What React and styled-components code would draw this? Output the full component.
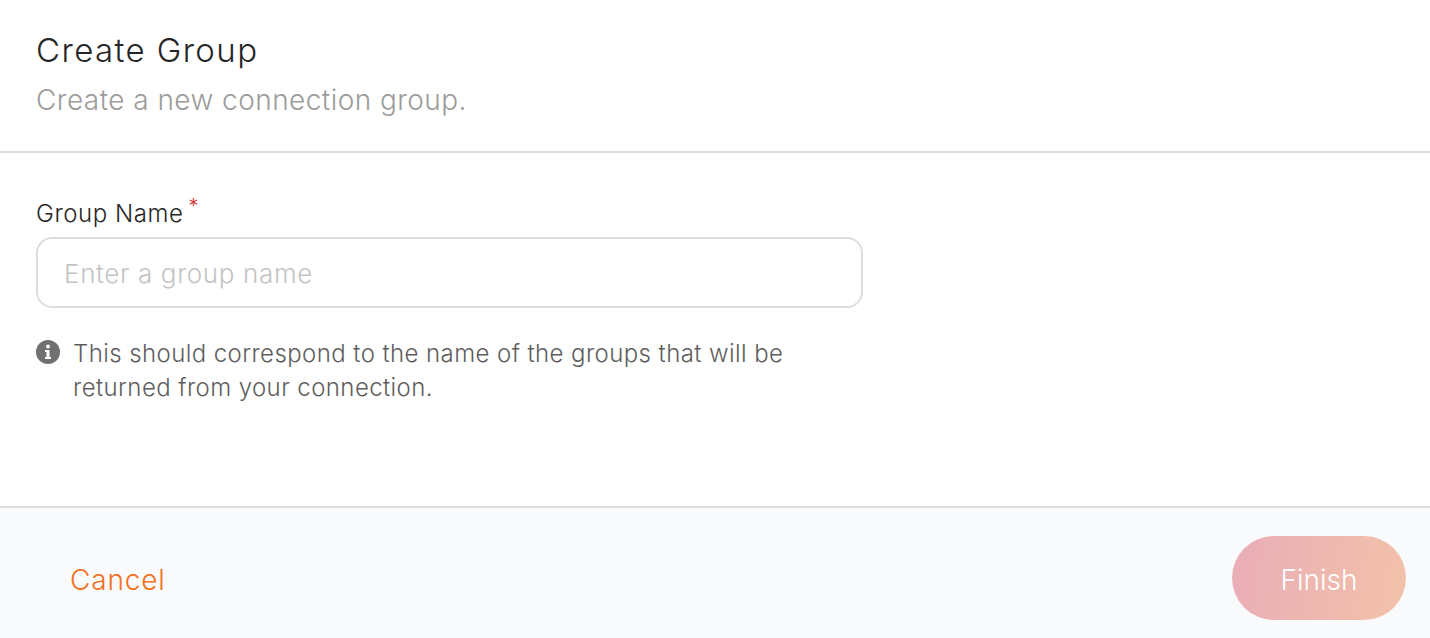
import React from "react";
import styled, { createGlobalStyle } from "styled-components";

const Global = createGlobalStyle`
  html, body { margin: 0; padding: 0; background: #fff; }
  * { box-sizing: border-box; }
`;
const Page = styled.div`
  width: 1430px; height: 638px; display: flex; flex-direction: column;
  font-family: "Inter", "Noto Sans", sans-serif; background: #fff; overflow: hidden;
`;
const Header = styled.header`
  height: 153px; padding: 28px 36px 0; border-bottom: 2px solid #dcdcdc;
`;
const Title = styled.h1`
  margin: 0; font-size: 33px; line-height: 44px; font-weight: 300; letter-spacing: 1.4px; color: #262626;
`;
const Subtitle = styled.p`
  margin: 9px 0 0; font-size: 28px; line-height: 38px; font-weight: 300; letter-spacing: 0.45px; color: #9c9c9c;
`;
const Body = styled.main`
  flex: 1; padding: 45px 36px 0;
`;
const Label = styled.label`
  display: block; font-size: 24px; line-height: 32px; font-weight: 300; letter-spacing: 0.55px; color: #262626;
`;
const Star = styled.sup`
  color: #d32f2f; font-size: 20px; line-height: 0; margin-left: 5px;
`;
const Input = styled.input`
  display: block; width: 827px; height: 71px; margin-top: 7px; padding: 2px 26px 0;
  border: 2px solid #dedede; border-radius: 16px; outline: none; background: #fff;
  font: 300 26px "Inter", sans-serif; letter-spacing: 0.65px; color: #262626;
  &::placeholder { color: #c4c4c4; }
`;
const Hint = styled.div`
  display: flex; gap: 13px; margin-top: 29px; width: 770px;
`;
const HintText = styled.p`
  margin: 0; font-size: 24px; line-height: 34px; font-weight: 300; letter-spacing: 0.41px; color: #5e5e5e;
`;
const InfoIcon = styled.svg`
  width: 24px; height: 24px; flex: none; margin-top: 3px;
`;
const Footer = styled.footer`
  height: 132px; display: flex; align-items: center; justify-content: space-between;
  padding: 10px 24px 0 70px; background: #f9fafc; border-top: 2px solid #dcdcdc;
`;
const Cancel = styled.button`
  border: 0; padding: 4px 0 0; background: none; color: #f37021; font: 300 28px "Inter", sans-serif; letter-spacing: 0.85px;
`;
const Finish = styled.button`
  width: 174px; height: 84px; border: 0; padding: 4px 0 0; border-radius: 42px; color: #fff;
  background: linear-gradient(100deg, #e9adb7, #f3c2a9); font: 300 28px "Inter", sans-serif;
`;

export default function App() {
  return (
    <Page>
      <Global />
      <Header>
        <Title>Create Group</Title>
        <Subtitle>Create a new connection group.</Subtitle>
      </Header>
      <Body>
        <Label htmlFor="group-name">Group Name<Star>*</Star></Label>
        <Input id="group-name" placeholder="Enter a group name" />
        <Hint>
          <InfoIcon viewBox="0 0 24 24" aria-hidden="true">
            <circle cx="12" cy="12" r="12" fill="#707070" />
            <circle cx="12" cy="6.5" r="2" fill="#fff" />
            <path d="M9 10h4.5v7H15v2H9v-2h1.5v-5H9z" fill="#fff" />
          </InfoIcon>
          <HintText>This should correspond to the name of the groups that will be returned from your connection.</HintText>
        </Hint>
      </Body>
      <Footer>
        <Cancel>Cancel</Cancel>
        <Finish>Finish</Finish>
      </Footer>
    </Page>
  );
}
